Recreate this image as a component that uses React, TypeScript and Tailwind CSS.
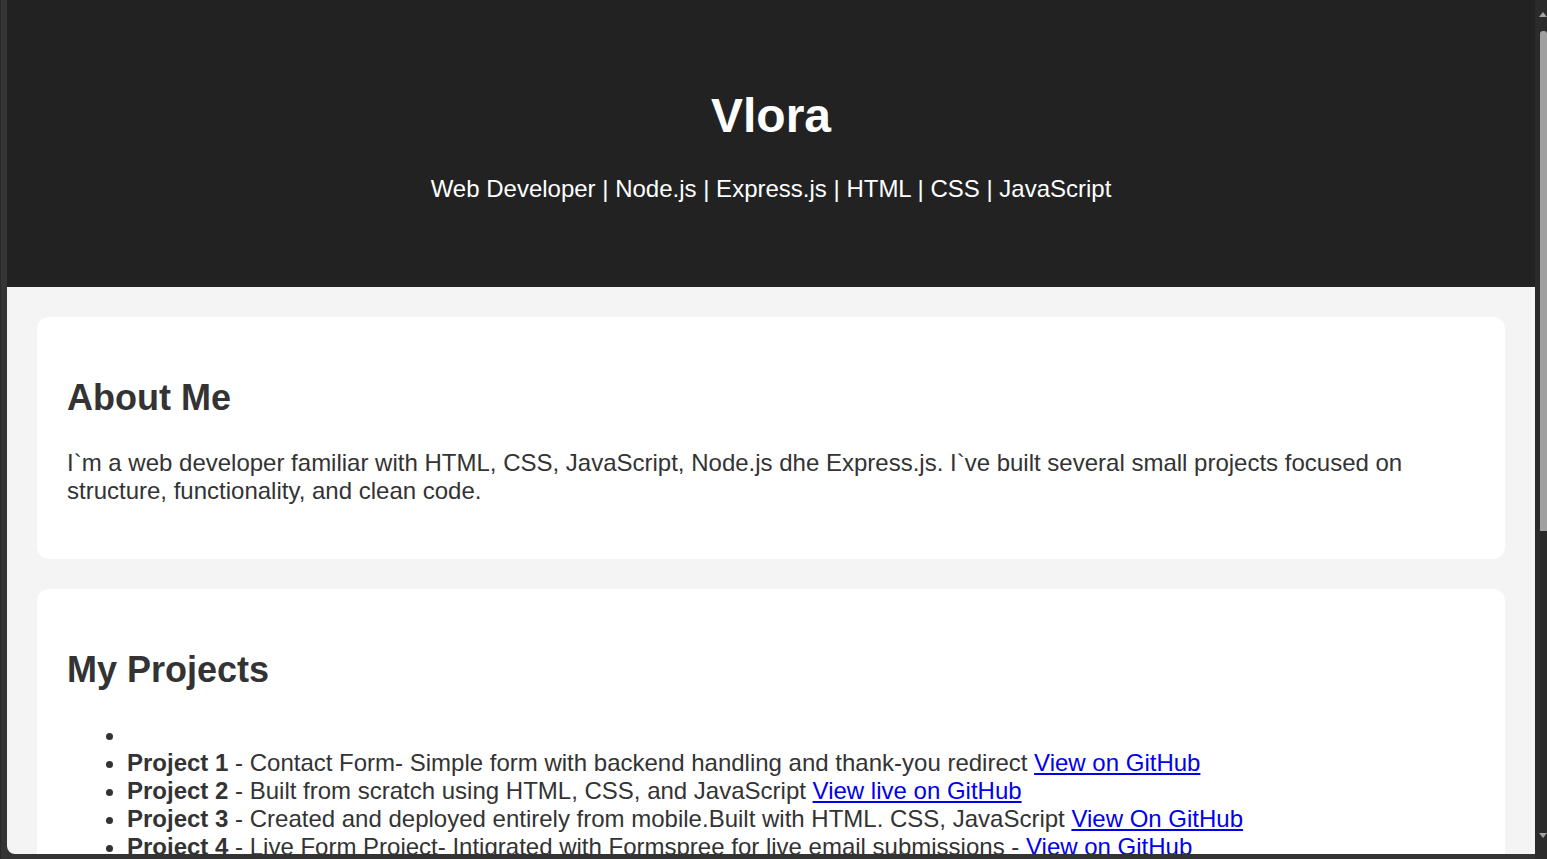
import React from "react";

const font = { fontFamily: '"Liberation Sans", Arial, sans-serif' };

export default function App() {
  return (
    <div className="flex h-[859px] w-[1547px] overflow-hidden bg-[#333333]" style={font}>
      <div className="w-[7px] shrink-0 border-l border-[#2a2a2a] bg-[#353535]" />
      <div className="flex h-[854px] flex-1 flex-col overflow-hidden rounded-bl-[8px] bg-[#f4f4f4] text-[24px] leading-[28px] text-[#333333]">
        <header className="h-[287px] shrink-0 bg-[#222222] pt-[88px] text-center text-white">
          <h1 className="m-0 text-[48px] font-bold leading-[55px]">Vlora</h1>
          <p className="mt-[32px] text-[24px] leading-[28px]">
            Web Developer | Node.js | Express.js | HTML | CSS | JavaScript
          </p>
        </header>
        <main className="flex flex-col gap-[30px] px-[30px] pt-[30px]">
          <section className="rounded-[12px] bg-white p-[30px]">
            <h2 className="mt-[30px] text-[36px] font-bold leading-[42px]">About Me</h2>
            <p className="mb-[24px] mt-[30px]">
              I`m a web developer familiar with HTML, CSS, JavaScript, Node.js dhe Express.js. I`ve built several small projects focused on structure, functionality, and clean code.
            </p>
          </section>
          <section className="rounded-[12px] bg-white p-[30px]">
            <h2 className="mt-[30px] text-[36px] font-bold leading-[42px]">My Projects</h2>
            <ul className="mt-[30px] list-disc pl-[60px]">
              <li className="h-[28px]"></li>
              <li>
                <strong>Project 1</strong> - Contact Form- Simple form with backend handling and thank-you redirect{" "}
                <a href="#" className="text-[#0000ee] underline">View on GitHub</a>
              </li>
              <li>
                <strong>Project 2</strong> - Built from scratch using HTML, CSS, and JavaScript{" "}
                <a href="#" className="text-[#0000ee] underline">View live on GitHub</a>
              </li>
              <li>
                <strong>Project 3</strong> - Created and deployed entirely from mobile.Built with HTML. CSS, JavaScript{" "}
                <a href="#" className="text-[#0000ee] underline">View On GitHub</a>
              </li>
              <li>
                <strong>Project 4</strong> - Live Form Project- Intigrated with Formspree for live email submissions -{" "}
                <a href="#" className="text-[#0000ee] underline">View on GitHub</a>
              </li>
            </ul>
          </section>
        </main>
      </div>
      <div className="relative w-[12px] shrink-0 bg-[#2b2b2b]">
        <svg className="absolute left-[4px] top-[11px]" width="8" height="7" viewBox="0 0 8 7">
          <polygon points="0,6 4,1 8,6" fill="#a3a3a3" />
        </svg>
        <div className="absolute left-[5px] right-0 top-[31px] h-[500px] rounded-t-[3px] bg-[#a0a0a0]" />
        <svg className="absolute left-[4px] top-[832px]" width="8" height="7" viewBox="0 0 8 7">
          <polygon points="0,1 4,6 8,1" fill="#a3a3a3" />
        </svg>
      </div>
    </div>
  );
}
